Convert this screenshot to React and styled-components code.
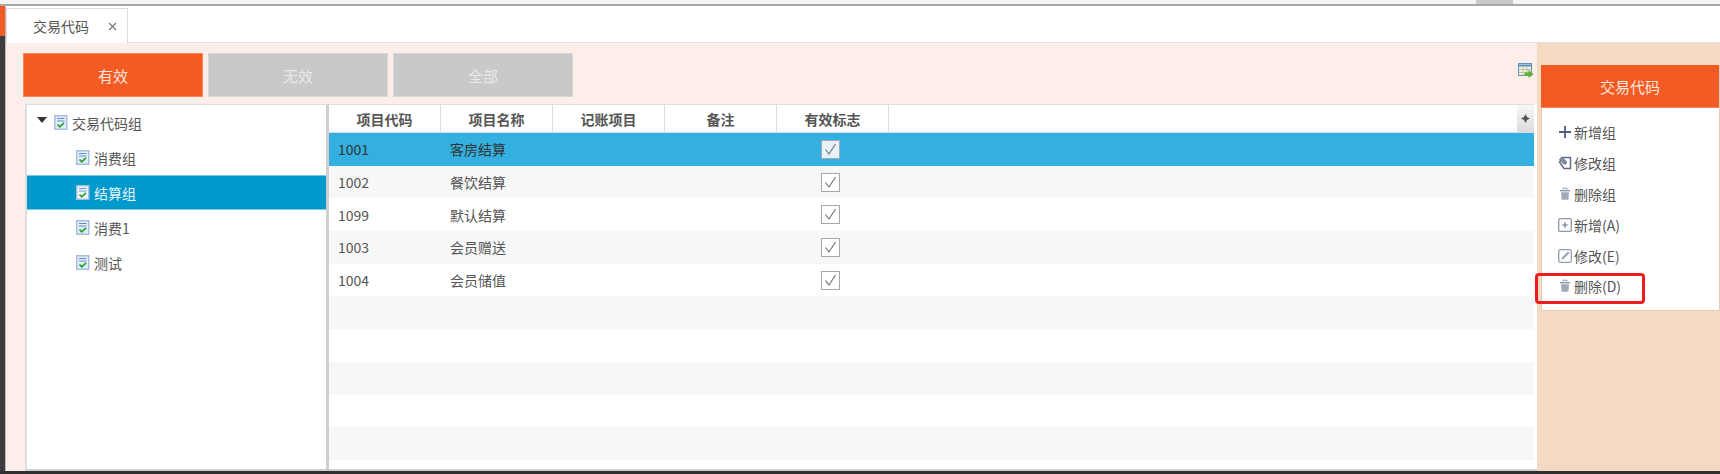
import React from 'react';
import styled, {createGlobalStyle} from 'styled-components';

const GlobalStyle = createGlobalStyle`
  html, body {
    margin: 0;
    padding: 0;
    background: #fff;
  }
  body {
    font-family: "Noto Sans CJK SC", "Noto Sans", sans-serif;
    font-size: 14px;
    color: #555;
  }
  * {
    box-sizing: border-box;
  }
`

const Page = styled.div`
  width: 1720px;
  height: 474px;
  display: flex;
  flex-direction: column;
  overflow: hidden;
`
const TopStrip = styled.div`
  height: 6px;
  flex: none;
  background: #f4f4f4;
  border-bottom: 2px solid #a8a8a8;
  display: flex;
  justify-content: flex-end;
  padding-right: 207px;
`
const TopThumb = styled.div`
  width: 37px;
  height: 4px;
  background: #c8c8c8;
`
const Middle = styled.div`
  flex: 1;
  min-height: 0;
  display: flex;
`
const LeftRail = styled.div`
  width: 6px;
  flex: none;
  background: linear-gradient(to bottom, #f45b24 0, #f45b24 30px, #3c3c3c 30px);
  border-right: 1px solid #bbb;
`
const Main = styled.div`
  flex: 1;
  min-width: 0;
  display: flex;
  flex-direction: column;
`
const BottomStrip = styled.div`
  height: 3px;
  flex: none;
  background: #2f2f2f;
`
const TabBar = styled.div`
  height: 37px;
  flex: none;
  background: #fff;
  border-bottom: 1px solid #e2e2e2;
  padding-top: 2px;
  display: flex;
`
const Tab = styled.div`
  width: 122px;
  height: 35px;
  border: 1px solid #dcdcdc;
  border-bottom: none;
  background: #fff;
  display: flex;
  align-items: center;
  padding-left: 26px;
  gap: 19px;
  color: #555;
`
const Content = styled.div`
  flex: 1;
  min-height: 0;
  display: flex;
`
const LeftPane = styled.div`
  flex: 1;
  min-width: 0;
  background: #fdeeea;
  padding: 10px 0 0 17px;
  display: flex;
  flex-direction: column;
`
const RightPane = styled.div`
  width: 183px;
  flex: none;
  background: #f5dac3;
  padding: 22px 0 0 4px;
`
const FilterRow = styled.div`
  display: flex;
  gap: 5px;
  height: 44px;
  flex: none;
  position: relative;
`
const FilterButton = styled.div`
  width: 180px;
  height: 44px;
  display: flex;
  align-items: center;
  justify-content: center;
  font-size: 15px;
  color: ${props => props.$active ? '#fde6dc' : '#e9e9e9'};
  background: ${props => props.$active ? '#f45b24' : '#c9c9c9'};
  border: 1px solid ${props => props.$active ? '#f7855c' : '#d6d6d6'};
`
const ExportIcon = styled.svg`
  position: absolute;
  top: 10px;
  right: 3px;
`
const Workspace = styled.div`
  flex: 1;
  min-height: 0;
  margin: 7px 0 0 2px;
  display: flex;
  background: #fff;
`
const Tree = styled.div`
  width: 304px;
  flex: none;
  border: 2px solid #dedede;
  border-top-width: 1px;
  border-right: 3px solid #cfcfcf;
  border-bottom: 2px solid #cfcfcf;
  background: #fff;
`
const TreeRow = styled.div`
  height: 35px;
  display: flex;
  align-items: center;
  gap: 4px;
  padding-left: ${props => props.$child ? '49px' : '10px'};
  color: ${props => props.$selected ? '#e8f5fb' : '#555'};
  background: ${props => props.$selected ? '#0099cc' : 'transparent'};
  border-top: 1px solid ${props => props.$selected ? '#7cc8e6' : 'transparent'};
  border-bottom: 1px solid ${props => props.$selected ? '#7cc8e6' : 'transparent'};
`
const Arrow = styled.span`
  width: 0;
  height: 0;
  margin: -5px 3px 0 0;
  border-left: 5px solid transparent;
  border-right: 5px solid transparent;
  border-top: 6px solid #333;
`
const Grid = styled.div`
  flex: 1;
  min-width: 0;
  padding-right: 3px;
  border-bottom: 2px solid #cfcfcf;
  overflow: hidden;
`
const HeaderRow = styled.div`
  height: 29px;
  display: flex;
  border-top: 1px solid #dedede;
  border-bottom: 1px solid #dcdcdc;
`
const HeadCell = styled.div`
  width: 112px;
  flex: none;
  display: flex;
  align-items: center;
  justify-content: center;
  font-weight: 700;
  font-size: 14px;
  color: #555;
  border-right: 1px solid #dcdcdc;
`
const HeadFill = styled.div`
  flex: 1;
`
const ScrollCorner = styled.div`
  width: 17px;
  flex: none;
  display: flex;
  align-items: center;
  justify-content: center;
  background: linear-gradient(to bottom, #f6f6f6, #dcdcdc);
`
const Row = styled.div`
  height: 32.7px;
  display: flex;
  align-items: center;
  color: ${props => props.$selected ? '#333' : '#555'};
  background: ${props => props.$selected ? '#33b0e0' : props.$striped ? '#f7f7f7' : '#fff'};
`
const Cell = styled.div`
  width: 112px;
  flex: none;
  padding-left: 9px;
`
const Blank = styled.div`
  width: 224px;
  flex: none;
`
const CheckCell = styled.div`
  width: 112px;
  flex: none;
  display: flex;
  justify-content: center;
  padding-right: 6px;
`
const CheckBox = styled.div`
  width: 19px;
  height: 19px;
  border: 1px solid #a8a8a8;
  background: ${props => props.$selected ? '#e6f4fa' : '#fff'};
  display: flex;
  align-items: center;
  justify-content: center;
`
const Card = styled.div`
  background: #fff;
  border: 1px solid #e4cdb8;
  border-top: none;
  height: 246px;
  position: relative;
`
const CardTitle = styled.div`
  height: 43px;
  margin: 0 0 0 -1px;
  display: flex;
  align-items: center;
  justify-content: center;
  font-size: 15px;
  color: #fde6dc;
  background: #f45b24;
  border-bottom: 1px solid #f7855c;
`
const MenuList = styled.div`
  padding-top: 9px;
`
const MenuItem = styled.div`
  height: 30.8px;
  display: flex;
  align-items: center;
  padding-left: 16px;
  color: #555;
`
const MenuIcon = styled.svg`
  flex: none;
`
const Highlight = styled.div`
  position: absolute;
  left: -7px;
  top: 208px;
  width: 110px;
  height: 31px;
  border: 3px solid #ee1c1c;
  border-radius: 4px;
`

const DocIcon = ({light}) => (
    <svg width="14" height="15" viewBox="0 0 14 15">
        <rect x="0.75" y="0.75" width="12" height="13.5" fill={light ? '#f4fafd' : '#e4eefa'} stroke="#a7bfdf" strokeWidth="1.5"/>
        <path d="M3 3.500h7.500M3 6h7.500" stroke="#5f8fc4" fill="none"/>
        <path d="M3.500 9.500l2.200 2.300 4.300-4" stroke="#22a32a" strokeWidth="1.800" fill="none"/>
    </svg>
)

const CloseIcon = () => (
    <svg width="9" height="9" viewBox="0 0 9 9">
        <path d="M1 1l7 7M8 1l-7 7" stroke="#777" strokeWidth="1.2" fill="none"/>
    </svg>
)

const CornerIcon = () => (
    <svg width="9" height="9" viewBox="0 0 9 9">
        <path d="M4.500 0l1.500 3 3 1.500-3 1.500-1.500 3-1.500-3-3-1.500 3-1.500z" fill="#555"/>
    </svg>
)

const PlusIcon = () => (
    <MenuIcon width="16" height="14" viewBox="0 0 16 14">
        <path d="M7 1v12M1 7h12" stroke="#4d5f85" strokeWidth="1.800" fill="none"/>
    </MenuIcon>
)

const EditGroupIcon = () => (
    <MenuIcon width="16" height="14" viewBox="0 0 16 14">
        <path d="M5 1.500h7.500v11H6L1.500 6z" fill="#fff" stroke="#5f6d86" strokeWidth="1.500"/>
        <path d="M1.500 3.500L4 1l4.500 4.800-.7 2.500-2.600-.7z" fill="#7f8ca3" stroke="#5f6d86" strokeWidth="0.800"/>
    </MenuIcon>
)

const TrashIcon = () => (
    <MenuIcon width="16" height="14" viewBox="0 0 16 14">
        <path d="M5 2.500V1.200h4v1.300" stroke="#8f98aa" fill="none"/>
        <path d="M2 3h10v1.400H2z" fill="#8f98aa"/>
        <path d="M3 5.200h8l-.6 7.600H3.600z" fill="#a3abba"/>
    </MenuIcon>
)

const AddBoxIcon = () => (
    <MenuIcon width="16" height="14" viewBox="0 0 16 14">
        <rect x="0.7" y="0.7" width="12.600" height="12.600" rx="1" fill="#fff" stroke="#8f98aa" strokeWidth="1.300"/>
        <path d="M7 4.200v5.600M4.200 7h5.600" stroke="#66718a" strokeWidth="1.200" fill="none"/>
    </MenuIcon>
)

const EditBoxIcon = () => (
    <MenuIcon width="16" height="14" viewBox="0 0 16 14">
        <rect x="0.7" y="0.7" width="12.600" height="12.600" rx="1.500" fill="#fff" stroke="#949cae" strokeWidth="1.300"/>
        <path d="M3 11l.6-2.600L10 2l2 2-6.400 6.400z" fill="#a3abba" stroke="#fff" strokeWidth="0.600"/>
    </MenuIcon>
)

const CheckMark = () => (
    <svg width="13" height="13" viewBox="0 0 13 13">
        <path d="M1.500 6.500l3.500 4.500 6.500-10" stroke="#777" strokeWidth="1.200" fill="none"/>
    </svg>
)

const filters = ['有效', '无效', '全部']
const groups = ['消费组', '结算组', '消费1', '测试']
const columns = ['项目代码', '项目名称', '记账项目', '备注', '有效标志']
const items = [
    {code: '1001', name: '客房结算'},
    {code: '1002', name: '餐饮结算'},
    {code: '1099', name: '默认结算'},
    {code: '1003', name: '会员赠送'},
    {code: '1004', name: '会员储值'},
]
const blankRows = [5, 6, 7, 8, 9, 10]
const menu = [
    {label: '新增组', Icon: PlusIcon},
    {label: '修改组', Icon: EditGroupIcon},
    {label: '删除组', Icon: TrashIcon},
    {label: '新增(A)', Icon: AddBoxIcon},
    {label: '修改(E)', Icon: EditBoxIcon},
    {label: '删除(D)', Icon: TrashIcon},
]

export default function App() {
    return (
        <Page>
            <GlobalStyle/>
            <TopStrip><TopThumb/></TopStrip>
            <Middle>
                <LeftRail/>
                <Main>
                    <TabBar>
                        <Tab>交易代码<CloseIcon/></Tab>
                    </TabBar>
                    <Content>
                        <LeftPane>
                            <FilterRow>
                                {filters.map((f, i) => <FilterButton key={f} $active={i === 0}>{f}</FilterButton>)}
                                <ExportIcon width="16" height="16" viewBox="0 0 16 16">
                                    <rect x="0.5" y="0.5" width="13" height="12" fill="#f4f1d8" stroke="#5b93c7"/>
                                    <path d="M1 2.500h12" stroke="#5b93c7" strokeWidth="2" fill="none"/>
                                    <path d="M1 6.500h12M1 9.500h12M5 4v8M9 4v8" stroke="#b7c6a8" fill="none"/>
                                    <path d="M6.500 9.500h4V7l5 4-5 4v-2.500h-4z" fill="#5fb233"/>
                                </ExportIcon>
                            </FilterRow>
                            <Workspace>
                                <Tree>
                                    <TreeRow><Arrow/><DocIcon/>交易代码组</TreeRow>
                                    {groups.map((g, i) => (
                                        <TreeRow key={g} $child $selected={i === 1}>
                                            <DocIcon light={i === 1}/>{g}
                                        </TreeRow>
                                    ))}
                                </Tree>
                                <Grid>
                                    <HeaderRow>
                                        {columns.map(c => <HeadCell key={c}>{c}</HeadCell>)}
                                        <HeadFill/>
                                        <ScrollCorner><CornerIcon/></ScrollCorner>
                                    </HeaderRow>
                                    {items.map((item, i) => (
                                        <Row key={item.code} $selected={i === 0} $striped={i % 2 === 1}>
                                            <Cell>{item.code}</Cell>
                                            <Cell>{item.name}</Cell>
                                            <Blank/>
                                            <CheckCell>
                                                <CheckBox $selected={i === 0}><CheckMark/></CheckBox>
                                            </CheckCell>
                                        </Row>
                                    ))}
                                    {blankRows.map(n => <Row key={n} $striped={n % 2 === 1}/>)}
                                </Grid>
                            </Workspace>
                        </LeftPane>
                        <RightPane>
                            <Card>
                                <CardTitle>交易代码</CardTitle>
                                <MenuList>
                                    {menu.map(({label, Icon}) => (
                                        <MenuItem key={label}><Icon/>{label}</MenuItem>
                                    ))}
                                </MenuList>
                                <Highlight/>
                            </Card>
                        </RightPane>
                    </Content>
                </Main>
            </Middle>
            <BottomStrip/>
        </Page>
    )
}
